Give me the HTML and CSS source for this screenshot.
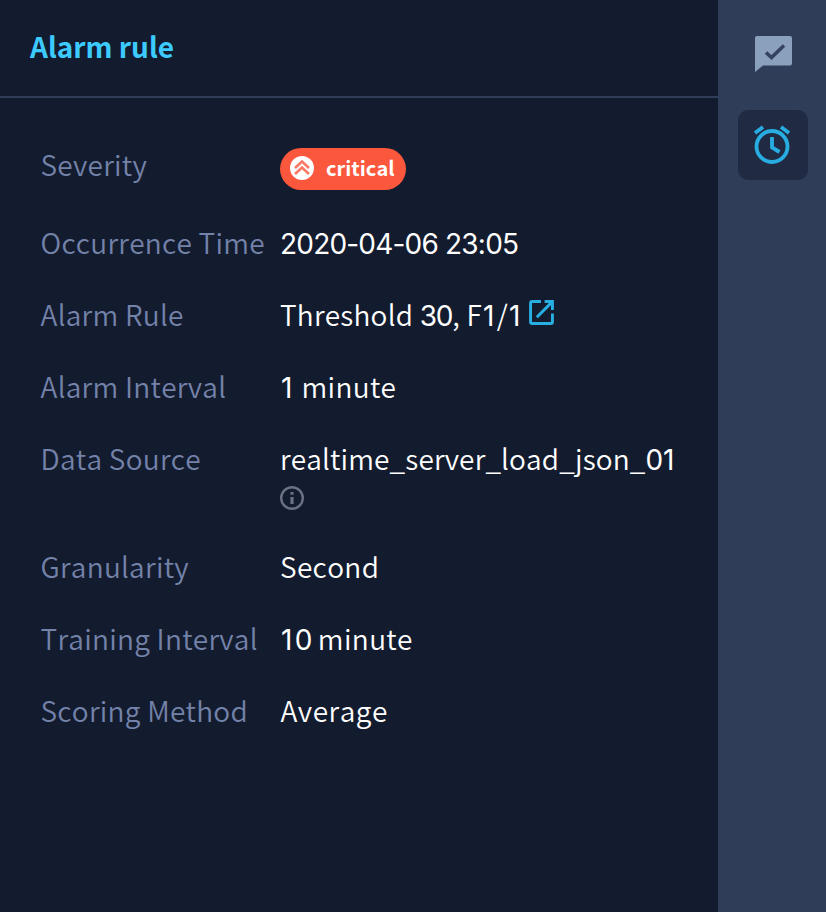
FILE: index.html
```html
<!DOCTYPE html>
<html lang="en">
<head>
<meta charset="utf-8">
<title>Alarm rule</title>
<link rel="stylesheet" href="styles.css">
</head>
<body>
<div class="layout">
  <main class="panel">
    <header class="panel-header"><h1 class="title">Alarm rule</h1></header>
    <dl class="details">
      <div class="row row-severity">
        <dt class="label">Severity</dt>
        <dd class="value">
          <span class="badge">
            <svg class="badge-icon" viewBox="0 0 24 24"><circle cx="12" cy="12" r="12" fill="#fff"/><path d="M5 12 12 5.500l7 6.500M5 18 12 11.500l7 6.500" fill="none" stroke="#fb7a67" stroke-width="2.700"/></svg>
            <span class="badge-text">critical</span>
          </span>
        </dd>
      </div>
      <div class="row"><dt class="label">Occurrence Time</dt><dd class="value"><span class="num num-time">2020-04-06 23:05</span></dd></div>
      <div class="row">
        <dt class="label">Alarm Rule</dt>
        <dd class="value value-link"><span class="rule-name">Threshold <span class="num">30</span>, F<span class="num one">1</span>/<span class="num one">1</span></span>
          <svg class="link-icon" viewBox="0 0 24 24"><path d="M11.500 1.500H3Q1.500 1.500 1.500 3V21Q1.500 22.500 3 22.500H21Q22.500 22.500 22.500 21V13M7.500 16.500 21.500 2.500M15 1.500H22.500V9.500" fill="none" stroke="#27aee2" stroke-width="2.800"/></svg>
        </dd>
      </div>
      <div class="row"><dt class="label">Alarm Interval</dt><dd class="value"><span class="num one">1</span> minute</dd></div>
      <div class="row">
        <dt class="label">Data Source</dt>
        <dd class="value value-source"><span class="source-name">realtime_server_load_json_<span class="num">0</span><span class="num one">1</span></span>
          <svg class="info-icon" viewBox="0 0 24 24"><circle cx="12" cy="12" r="10.800" fill="none" stroke="#6b7083" stroke-width="2.400"/><path d="M12 6v2.700M12 11v7" stroke="#6b7083" stroke-width="3.200"/></svg>
        </dd>
      </div>
      <div class="row"><dt class="label">Granularity</dt><dd class="value">Second</dd></div>
      <div class="row"><dt class="label">Training Interval</dt><dd class="value"><span class="num one">1</span><span class="num">0</span> minute</dd></div>
      <div class="row"><dt class="label">Scoring Method</dt><dd class="value value-method">Average</dd></div>
    </dl>
  </main>
  <nav class="rail">
    <button class="rail-button" aria-label="Feedback">
      <svg class="rail-icon" viewBox="0 0 40 40"><path d="M4 1H37Q39 1 39 3V28Q39 30.500 37 30.500H10L2 37V3Q2 1 4 1Z" fill="#8ba0bc"/><path d="M13 17.500 18.500 22.500 31 10.500" fill="none" stroke="#34425f" stroke-width="3.500"/></svg>
    </button>
    <button class="rail-button rail-button-active" aria-label="Alarm">
      <svg class="rail-icon" viewBox="0 0 40 40"><g fill="none" stroke="#27ade2" stroke-width="3.800"><circle cx="19" cy="21.500" r="15.500"/><path d="M2 8 10 2M28 2 36 8M19 12v10.500L26.500 27"/></g></svg>
    </button>
  </nav>
</div>
</body>
</html>
```
FILE: styles.css
```css
* { box-sizing: border-box; }
body {
  margin: 0;
  background: #131b2e;
  color: #fff;
  font-family: "Noto Sans CJK KR", "Noto Sans", sans-serif;
  font-size: 28px;
  line-height: 36px;
  font-kerning: none;
}
.layout { display: flex; height: 912px; }
.panel { flex: 1; }
.panel-header {
  height: 98px;
  padding: 28px 30px 0;
  border-bottom: 2px solid #303d59;
}
.title { margin: 0; color: #3dcbff; font-size: 28px; font-weight: 700; line-height: 36px; font-kerning: normal; }
.details { display: flex; flex-direction: column; gap: 36px; margin: 0; padding: 48px 40px 0; }
.row { display: grid; grid-template-columns: 240px 1fr; }
.row-severity { height: 42px; }
.label { padding-left: 0.5px; color: #7382a9; font-weight: 350; letter-spacing: 0.27px; }
.value { margin: 0; white-space: nowrap; font-weight: 350; letter-spacing: 0.35px; }
.value-method { padding-left: 0.5px; letter-spacing: 0.5px; }
.rule-name { letter-spacing: 0.22px; }
.num { font-family: Inter, sans-serif; font-weight: 400; line-height: 1; letter-spacing: -1.2px; }
.num-time { letter-spacing: -0.8px; }
.one { display: inline-block; width: 14.8px; letter-spacing: 0; text-indent: 1px; }
.source-name { letter-spacing: 0.14px; }
.badge {
  display: flex;
  align-items: center;
  gap: 12px;
  width: 126px;
  height: 42px;
  margin-top: 2px;
  padding-left: 10px;
  border-radius: 21px;
  background: #fa573c;
}
.badge-icon { width: 24px; height: 24px; margin-bottom: 2px; }
.badge-text { margin-bottom: 2px; font-size: 20px; font-weight: 700; line-height: 32px; letter-spacing: 0; }
.value-link { display: flex; align-items: flex-start; gap: 6px; }
.link-icon { width: 25px; height: 25px; margin-top: 4px; }
.value-source { display: flex; flex-direction: column; }
.info-icon { width: 24px; height: 24px; margin: 10px 0 2px; }
.rail {
  display: flex;
  flex-direction: column;
  align-items: flex-end;
  gap: 20px;
  width: 108px;
  padding: 20px 18px 0 0;
  background: #303d59;
}
.rail-button {
  display: flex;
  align-items: center;
  justify-content: center;
  width: 70px;
  height: 70px;
  padding: 0;
  border: 0;
  border-radius: 10px;
  background: transparent;
}
.rail-button-active { background: #202a43; }
.rail-icon { width: 40px; height: 40px; }
```
